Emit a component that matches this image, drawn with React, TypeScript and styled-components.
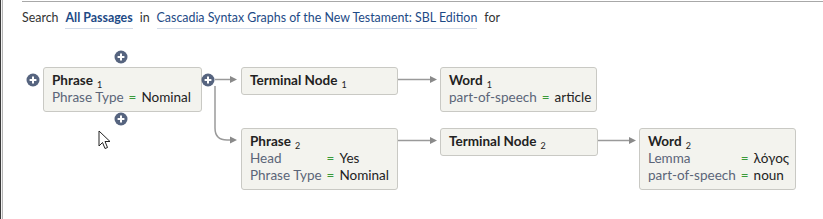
import * as React from "react";
import styled, { createGlobalStyle } from "styled-components";

const GlobalStyle = createGlobalStyle`
  html, body {
    margin: 0;
    padding: 0;
    background: #ffffff;
  }
  body {
    font-family: Lato, "Open Sans", sans-serif;
    color: #222;
  }
`;

type Row = { label: string; value: string };

type NodeData = {
  id: string;
  title: string;
  sub: string;
  x: number;
  y: number;
  width: number;
  rows?: Row[];
};

const nodes: NodeData[] = [
  {
    id: "p1",
    title: "Phrase",
    sub: "1",
    x: 43,
    y: 67,
    width: 159,
    rows: [{ label: "Phrase Type", value: "Nominal" }],
  },
  { id: "t1", title: "Terminal Node", sub: "1", x: 241, y: 67, width: 157 },
  {
    id: "w1",
    title: "Word",
    sub: "1",
    x: 440,
    y: 67,
    width: 157,
    rows: [{ label: "part-of-speech", value: "article" }],
  },
  {
    id: "p2",
    title: "Phrase",
    sub: "2",
    x: 241,
    y: 128,
    width: 157,
    rows: [
      { label: "Head", value: "Yes" },
      { label: "Phrase Type", value: "Nominal" },
    ],
  },
  { id: "t2", title: "Terminal Node", sub: "2", x: 440, y: 128, width: 158 },
  {
    id: "w2",
    title: "Word",
    sub: "2",
    x: 639,
    y: 128,
    width: 157,
    rows: [
      { label: "Lemma", value: "λόγος" },
      { label: "part-of-speech", value: "noun" },
    ],
  },
];

const plusButtons = [
  { x: 33, y: 80 },
  { x: 121, y: 57 },
  { x: 121, y: 119 },
  { x: 208, y: 80 },
];

function PlusIcon() {
  return (
    <svg width="14" height="14" viewBox="0 0 14 14">
      <circle cx="7" cy="7" r="6.5" fill="#56647f" />
      <path d="M7 3.6v6.8M3.6 7h6.8" stroke="#fff" strokeWidth="2" />
    </svg>
  );
}

function Connectors() {
  const head = (x: number, y: number) => `M${x - 7} ${y - 3.5} L${x} ${y} L${x - 7} ${y + 3.5} Z`;
  return (
    <Wires width="823" height="219">
      <g stroke="#9a9a9a" strokeWidth="1.5" fill="none">
        <path d="M215 79.5 H231" />
        <path d="M215 86 V128 Q215 140 227 140 H231" />
        <path d="M398 79.5 H430" />
        <path d="M398 140.5 H430" />
        <path d="M598 140.5 H629" />
      </g>
      <g fill="#8a8a8a">
        <path d={head(237, 79.5)} />
        <path d={head(237, 140)} />
        <path d={head(437, 79.5)} />
        <path d={head(437, 140.5)} />
        <path d={head(636, 140.5)} />
      </g>
    </Wires>
  );
}

function Cursor() {
  return (
    <CursorMark width="14" height="20" viewBox="0 0 14 20">
      <path
        d="M1 1 L1 16 L4.5 12.5 L7 18.5 L9.5 17.5 L7 11.5 L12 11.5 Z"
        fill="#fff"
        stroke="#222"
        strokeWidth="1"
        strokeLinejoin="round"
      />
    </CursorMark>
  );
}

export default function App() {
  return (
    <Frame>
      <GlobalStyle />
      <Header>
        <span>Search</span>
        <Link $bold>All Passages</Link>
        <span>in</span>
        <Link>Cascadia Syntax Graphs of the New Testament: SBL Edition</Link>
        <span>for</span>
      </Header>
      <Canvas>
        <Connectors />
        {nodes.map((n) => (
          <Node key={n.id} style={{ left: n.x, top: n.y, width: n.width }}>
            <Title>
              {n.title}
              <Sub>{n.sub}</Sub>
            </Title>
            {n.rows && (
              <Props>
                {n.rows.map((r) => (
                  <React.Fragment key={r.label}>
                    <Label>{r.label}</Label>
                    <Eq>=</Eq>
                    <Value>{r.value}</Value>
                  </React.Fragment>
                ))}
              </Props>
            )}
          </Node>
        ))}
        {plusButtons.map((p, i) => (
          <Plus key={i} style={{ left: p.x - 7, top: p.y - 7 }}>
            <PlusIcon />
          </Plus>
        ))}
        <Cursor />
      </Canvas>
    </Frame>
  );
}

const Frame = styled.div`
  position: relative;
  width: 823px;
  height: 219px;
  box-sizing: border-box;
  border-left: 1px solid #3a3a3a;
  box-shadow: inset 1px 0 0 #f2f2f2, inset 2px 0 0 #b5b5b5;
  overflow: hidden;

  &::before {
    content: "";
    position: absolute;
    left: 21px;
    right: 0;
    top: 1px;
    height: 1px;
    background: #a8a8a8;
  }
`;

const Header = styled.div`
  display: flex;
  align-items: baseline;
  gap: 7px;
  padding: 9px 0 0 21px;
  font-size: 12.4px;
  line-height: 18px;
  color: #333;
  white-space: nowrap;
`;

const Link = styled.span<{ $bold?: boolean }>`
  color: #1d4a86;
  font-weight: ${(p) => (p.$bold ? 700 : 400)};
  border-bottom: 1px solid #d3dbe8;
  padding-bottom: 1px;
`;

const Canvas = styled.div`
  position: absolute;
  inset: 0;
`;

const Wires = styled.svg`
  position: absolute;
  left: -1px;
  top: 0;
`;

const Node = styled.div`
  position: absolute;
  box-sizing: border-box;
  margin-left: -1px;
  padding: 4px 8px 5px;
  background: #f3f3ee;
  border: 1px solid #c9c9c4;
  border-radius: 3px;
  font-size: 13.5px;
  line-height: 17px;
  white-space: nowrap;
`;

const Title = styled.div`
  font-weight: 700;
  color: #222;
`;

const Sub = styled.sub`
  font-size: 9px;
  font-weight: 400;
  margin-left: 4px;
  vertical-align: -3px;
  line-height: 0;
`;

const Props = styled.div`
  display: grid;
  grid-template-columns: max-content max-content 1fr;
  column-gap: 5px;
`;

const Label = styled.span`
  color: #5b6578;
`;

const Eq = styled.span`
  color: #3a9a3a;
`;

const Value = styled.span`
  color: #222;
`;

const Plus = styled.div`
  position: absolute;
  margin-left: -1px;
  width: 14px;
  height: 14px;
  display: flex;
`;

const CursorMark = styled.svg`
  position: absolute;
  left: 97px;
  top: 130px;
`;
